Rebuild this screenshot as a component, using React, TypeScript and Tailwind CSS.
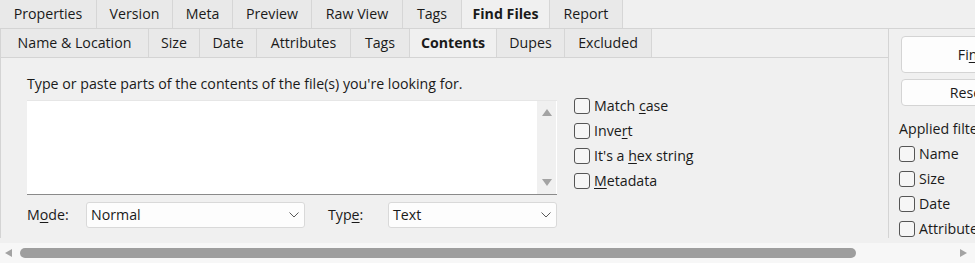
import React from "react";

const topTabs = [
    { label: "Properties", w: "w-[97px]" },
    { label: "Version", w: "w-[76px]" },
    { label: "Meta", w: "w-[60px]" },
    { label: "Preview", w: "w-[79px]" },
    { label: "Raw View", w: "w-[91px]" },
    { label: "Tags", w: "w-[59px]" },
    { label: "Find Files", w: "w-[88px]", active: true },
    { label: "Report", w: "w-[73px]" },
];

const subTabs = [
    { label: "Name & Location", w: "w-[148px]" },
    { label: "Size", w: "w-[51px]" },
    { label: "Date", w: "w-[57px]" },
    { label: "Attributes", w: "w-[94px]" },
    { label: "Tags", w: "w-[59px]" },
    { label: "Contents", w: "w-[87px]", active: true },
    { label: "Dupes", w: "w-[68px]" },
    { label: "Excluded", w: "w-[87px]" },
];

function Tab({ label, w, active }: { label: string; w: string; active?: boolean }) {
    return (
        <div
            className={`${w} h-full shrink-0 flex items-center justify-center border-r border-[#d6d6d6] ${
                active ? "bg-[#f0f0f0] font-bold" : "bg-[#e9e9e9]"
            }`}
        >
            {label}
        </div>
    );
}

function Check({ children }: { children: React.ReactNode }) {
    return (
        <div className="flex items-center h-[16px] gap-[4px]">
            <span className="w-[16px] h-[16px] shrink-0 rounded-[3px] border border-[#555] bg-[#f6f6f6]" />
            <span className="leading-none">{children}</span>
        </div>
    );
}

function Select({ value, w }: { value: string; w: string }) {
    return (
        <div className={`${w} h-[26px] bg-[#fdfdfd] border border-[#d9d9d9] rounded-[3px] flex items-center pl-[4px] pr-[5px]`}>
            <span className="flex-1">{value}</span>
            <svg width="10" height="6" viewBox="0 0 10 6">
                <polyline points="0.5,0.5 5,5 9.5,0.5" fill="none" stroke="#5a5a5a" strokeWidth="1" />
            </svg>
        </div>
    );
}

export default function App() {
    return (
        <div
            className="w-[975px] h-[263px] overflow-hidden bg-[#f0f0f0] text-[14.2px] text-[#1a1a1a] flex flex-col"
            style={{ fontFamily: '"Segoe UI", "Open Sans", sans-serif' }}
        >
            {/* Top tab strip */}
            <div className="h-[29px] shrink-0 flex border-b border-[#d4d4d4]">
                {topTabs.map((t) => (
                    <Tab key={t.label} {...t} />
                ))}
            </div>

            <div className="flex h-[214px] shrink-0">
                {/* Left: filter pane */}
                <div className="w-[889px] shrink-0 border-l border-r border-[#d4d4d4] h-[209px] flex flex-col">
                    <div className="h-[29px] shrink-0 flex border-b border-[#d4d4d4]">
                        {subTabs.map((t) => (
                            <Tab key={t.label} {...t} />
                        ))}
                    </div>

                    <div className="flex pl-[26px] pt-[15px]">
                        <div className="flex flex-col w-[530px]">
                            <div className="h-[22px] leading-[22px]">
                                Type or paste parts of the contents of the file(s) you're looking for.
                            </div>
                            <div className="mt-[5px] h-[95px] bg-white border-t border-[#e6e6e6] border-b border-b-[#8a8a8a] flex">
                                <div className="flex-1" />
                                <div className="w-[19px] mr-[1px] bg-[#f0f0f0] flex flex-col items-center justify-between py-[8px]">
                                    <svg width="10" height="7" viewBox="0 0 10 7">
                                        <polygon points="5,0 10,7 0,7" fill="#a3a3a3" />
                                    </svg>
                                    <svg width="10" height="7" viewBox="0 0 10 7">
                                        <polygon points="0,0 10,0 5,7" fill="#a3a3a3" />
                                    </svg>
                                </div>
                            </div>
                            <div className="flex items-center mt-[7px]">
                                <span className="w-[59px]">
                                    M<u className="underline-offset-2">o</u>de:
                                </span>
                                <Select value="Normal" w="w-[219px]" />
                                <span className="w-[60px] ml-[23px]">
                                    Typ<u className="underline-offset-2">e</u>:
                                </span>
                                <Select value="Text" w="w-[169px]" />
                            </div>
                        </div>
                        <div className="flex flex-col gap-[9px] ml-[17px] mt-[25px]">
                            <Check>
                                Match <u className="underline-offset-2">c</u>ase
                            </Check>
                            <Check>
                                Inve<u className="underline-offset-2">r</u>t
                            </Check>
                            <Check>
                                It's a <u className="underline-offset-2">h</u>ex string
                            </Check>
                            <Check>
                                <u className="underline-offset-2">M</u>etadata
                            </Check>
                        </div>
                    </div>
                </div>

                {/* Right: actions */}
                <div className="flex-1 pl-[12px] pt-[7px] flex flex-col">
                    <div className="w-[142px] h-[37px] shrink-0 bg-[#fdfdfd] border border-[#d4d4d4] rounded-[4px] flex items-center justify-center">
                        Fi<u className="underline-offset-2">n</u>d
                    </div>
                    <div className="w-[134px] h-[27px] shrink-0 mt-[6px] bg-[#fdfdfd] border border-[#d4d4d4] rounded-[4px] flex items-center justify-center">
                        Reset
                    </div>
                    <div className="mt-[16px] whitespace-nowrap -ml-[2px] leading-none">Applied filters</div>
                    <div className="flex flex-col gap-[9px] mt-[10px] -ml-[2px]">
                        <Check>Name</Check>
                        <Check>Size</Check>
                        <Check>Date</Check>
                        <Check>Attributes</Check>
                    </div>
                </div>
            </div>

            {/* Horizontal scrollbar */}
            <div className="flex-1 bg-[#f7f7f7] flex items-center pl-[5px] pr-[8px]">
                <svg width="7" height="8" viewBox="0 0 7 8">
                    <polygon points="7,0 7,8 0,4" fill="#a3a3a3" />
                </svg>
                <div className="ml-[8px] w-[836px] h-[10px] rounded-full bg-[#9e9e9e]" />
                <div className="flex-1" />
                <svg width="7" height="8" viewBox="0 0 7 8">
                    <polygon points="0,0 0,8 7,4" fill="#a3a3a3" />
                </svg>
            </div>
        </div>
    );
}
